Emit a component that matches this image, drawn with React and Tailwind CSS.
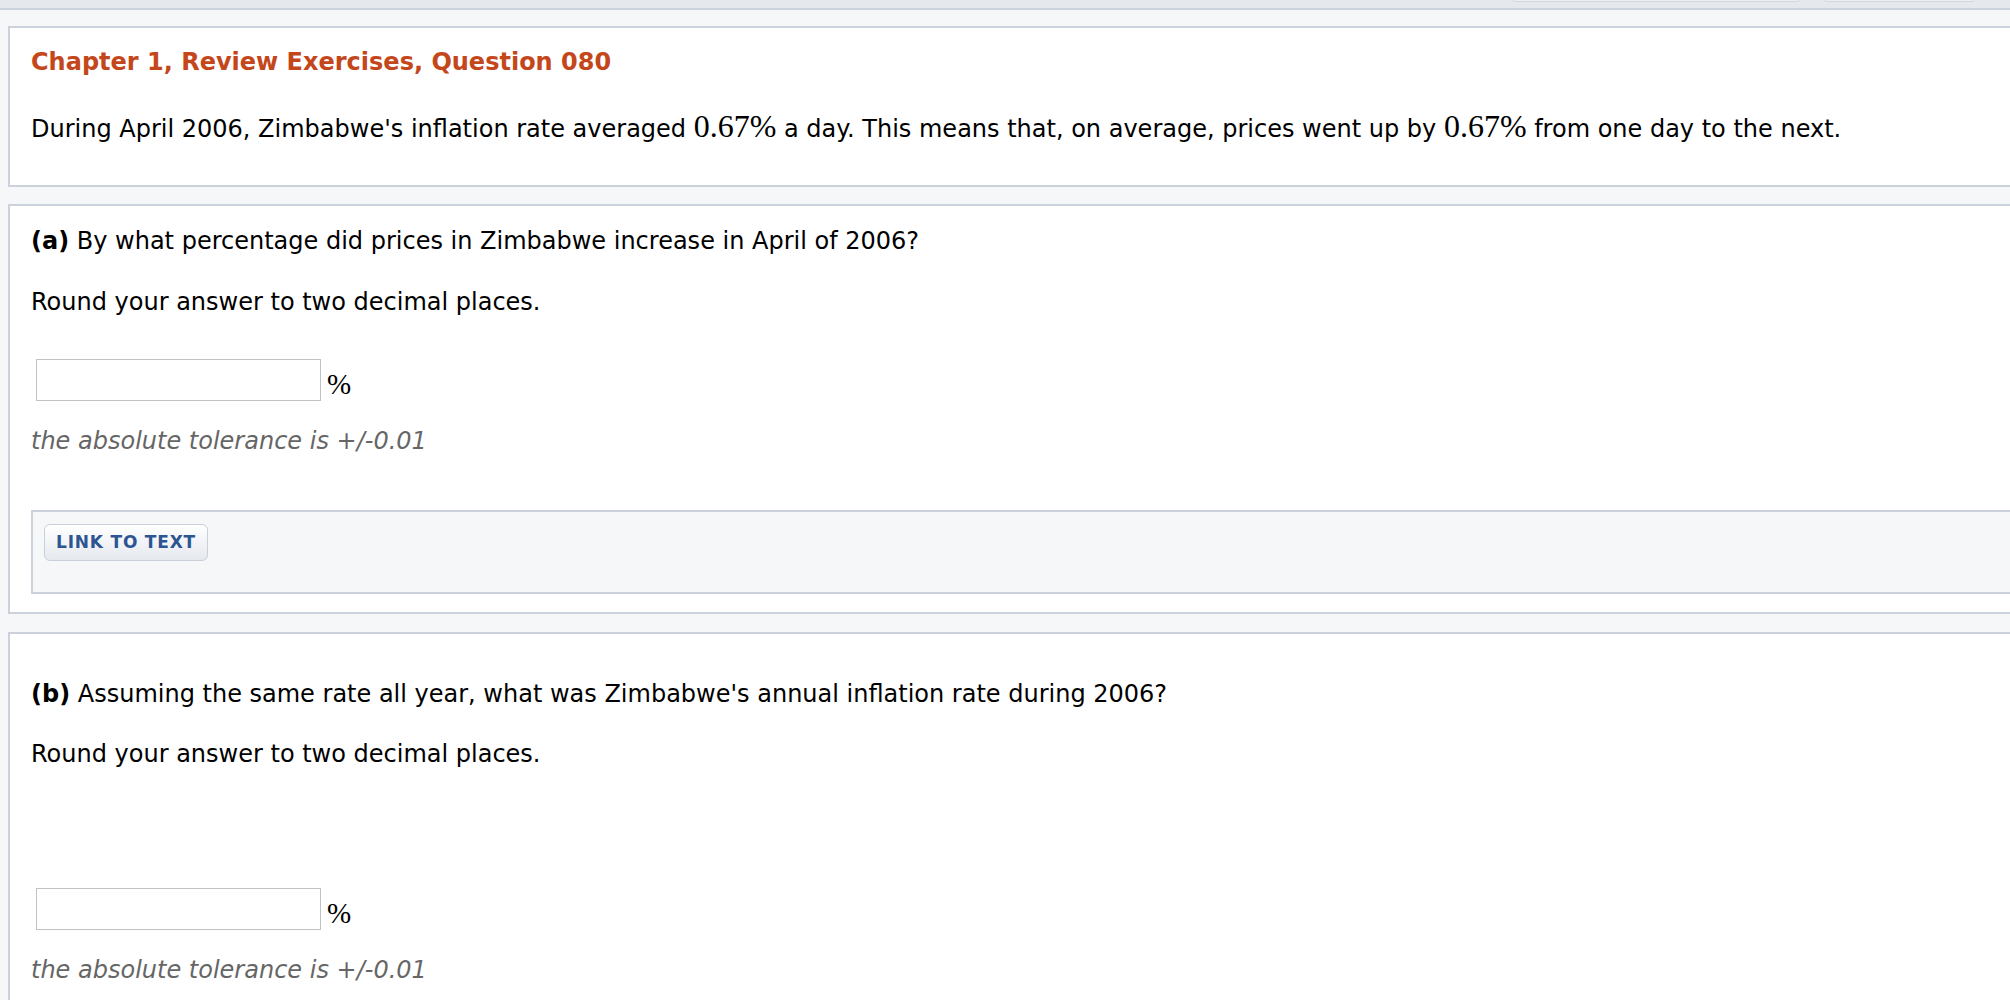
import React from 'react';

function M({ children }) {
  return (
    <span className="font-['Liberation_Serif','Times_New_Roman',serif] text-[32px] leading-[20px]">
      {children}
    </span>
  );
}

function AnswerRow({ className = '' }) {
  return (
    <div className={`flex items-center ${className}`}>
      <div className="ml-[5px] h-[42px] w-[285px] border border-[#c2c2c2] bg-white" />
      <span className="ml-[6px] mt-[8px] font-['Liberation_Serif','Times_New_Roman',serif] text-[29px] leading-[30px]">%</span>
    </div>
  );
}

function Tolerance({ className = '' }) {
  return (
    <div className={`text-[24px] leading-[30px] italic text-[#666] ${className}`}>
      the absolute tolerance is +/-0.01
    </div>
  );
}

export default function App() {
  return (
    <div className="min-h-screen w-[2010px] overflow-hidden bg-[#f6f7f9] font-['DejaVu_Sans',Verdana,sans-serif] text-black">
      {/* top strip */}
      <div className="flex h-[10px] justify-end gap-[24px] border-b-2 border-[#cdd3dc] bg-[#e5e8ed] pr-[36px]">
        <div className="h-[2px] w-[287px] rounded-b-[3px] border-x border-b border-[#d3d8e0] bg-[#eceef2]" />
        <div className="h-[2px] w-[150px] rounded-b-[3px] border-x border-b border-[#d3d8e0] bg-[#eceef2]" />
      </div>

      {/* intro card */}
      <div className="ml-[8px] mt-[16px] w-[2100px] border-2 border-[#cbd2dc] bg-white pl-[21px] pt-[20px] pb-[41px]">
        <div className="text-[24px] leading-[28px] font-bold text-[#c4471c]">
          Chapter 1, Review Exercises, Question 080
        </div>
        <div className="mt-[38px] text-[24px] leading-[30px]">
          During April 2006, Zimbabwe's inflation rate averaged <M>0.67%</M> a day. This means that, on average,
          prices went up by <M>0.67%</M> from one day to the next.
        </div>
      </div>

      {/* part a */}
      <div className="ml-[8px] mt-[17px] w-[2100px] border-2 border-[#cbd2dc] bg-white pl-[21px] pt-[20px] pb-[18px]">
        <div className="text-[24px] leading-[30px]">
          <span className="font-bold">(a)</span> By what percentage did prices in Zimbabwe increase in April of 2006?
        </div>
        <div className="mt-[31px] text-[24px] leading-[30px]">Round your answer to two decimal places.</div>
        <AnswerRow className="mt-[42px]" />
        <Tolerance className="mt-[25px]" />
        <div className="mt-[54px] border-2 border-[#cbd2dc] bg-[#f6f7f9] pl-[11px] pt-[12px] pb-[31px]">
          <button className="flex h-[37px] w-[164px] items-center justify-center rounded-[6px] border border-[#c9d0da] bg-gradient-to-b from-white to-[#e5e8ee] text-[17px] font-bold tracking-[0.8px] text-[#2c5591] shadow-[inset_0_1px_0_#fff]">
            LINK TO TEXT
          </button>
        </div>
      </div>

      {/* part b */}
      <div className="ml-[8px] mt-[18px] w-[2100px] border-2 border-[#cbd2dc] bg-white pl-[21px] pt-[45px] pb-[30px]">
        <div className="text-[24px] leading-[30px]">
          <span className="font-bold">(b)</span> Assuming the same rate all year, what was Zimbabwe's annual inflation rate
          during 2006?
        </div>
        <div className="mt-[30px] text-[24px] leading-[30px]">Round your answer to two decimal places.</div>
        <AnswerRow className="mt-[119px]" />
        <Tolerance className="mt-[25px]" />
      </div>
    </div>
  );
}
